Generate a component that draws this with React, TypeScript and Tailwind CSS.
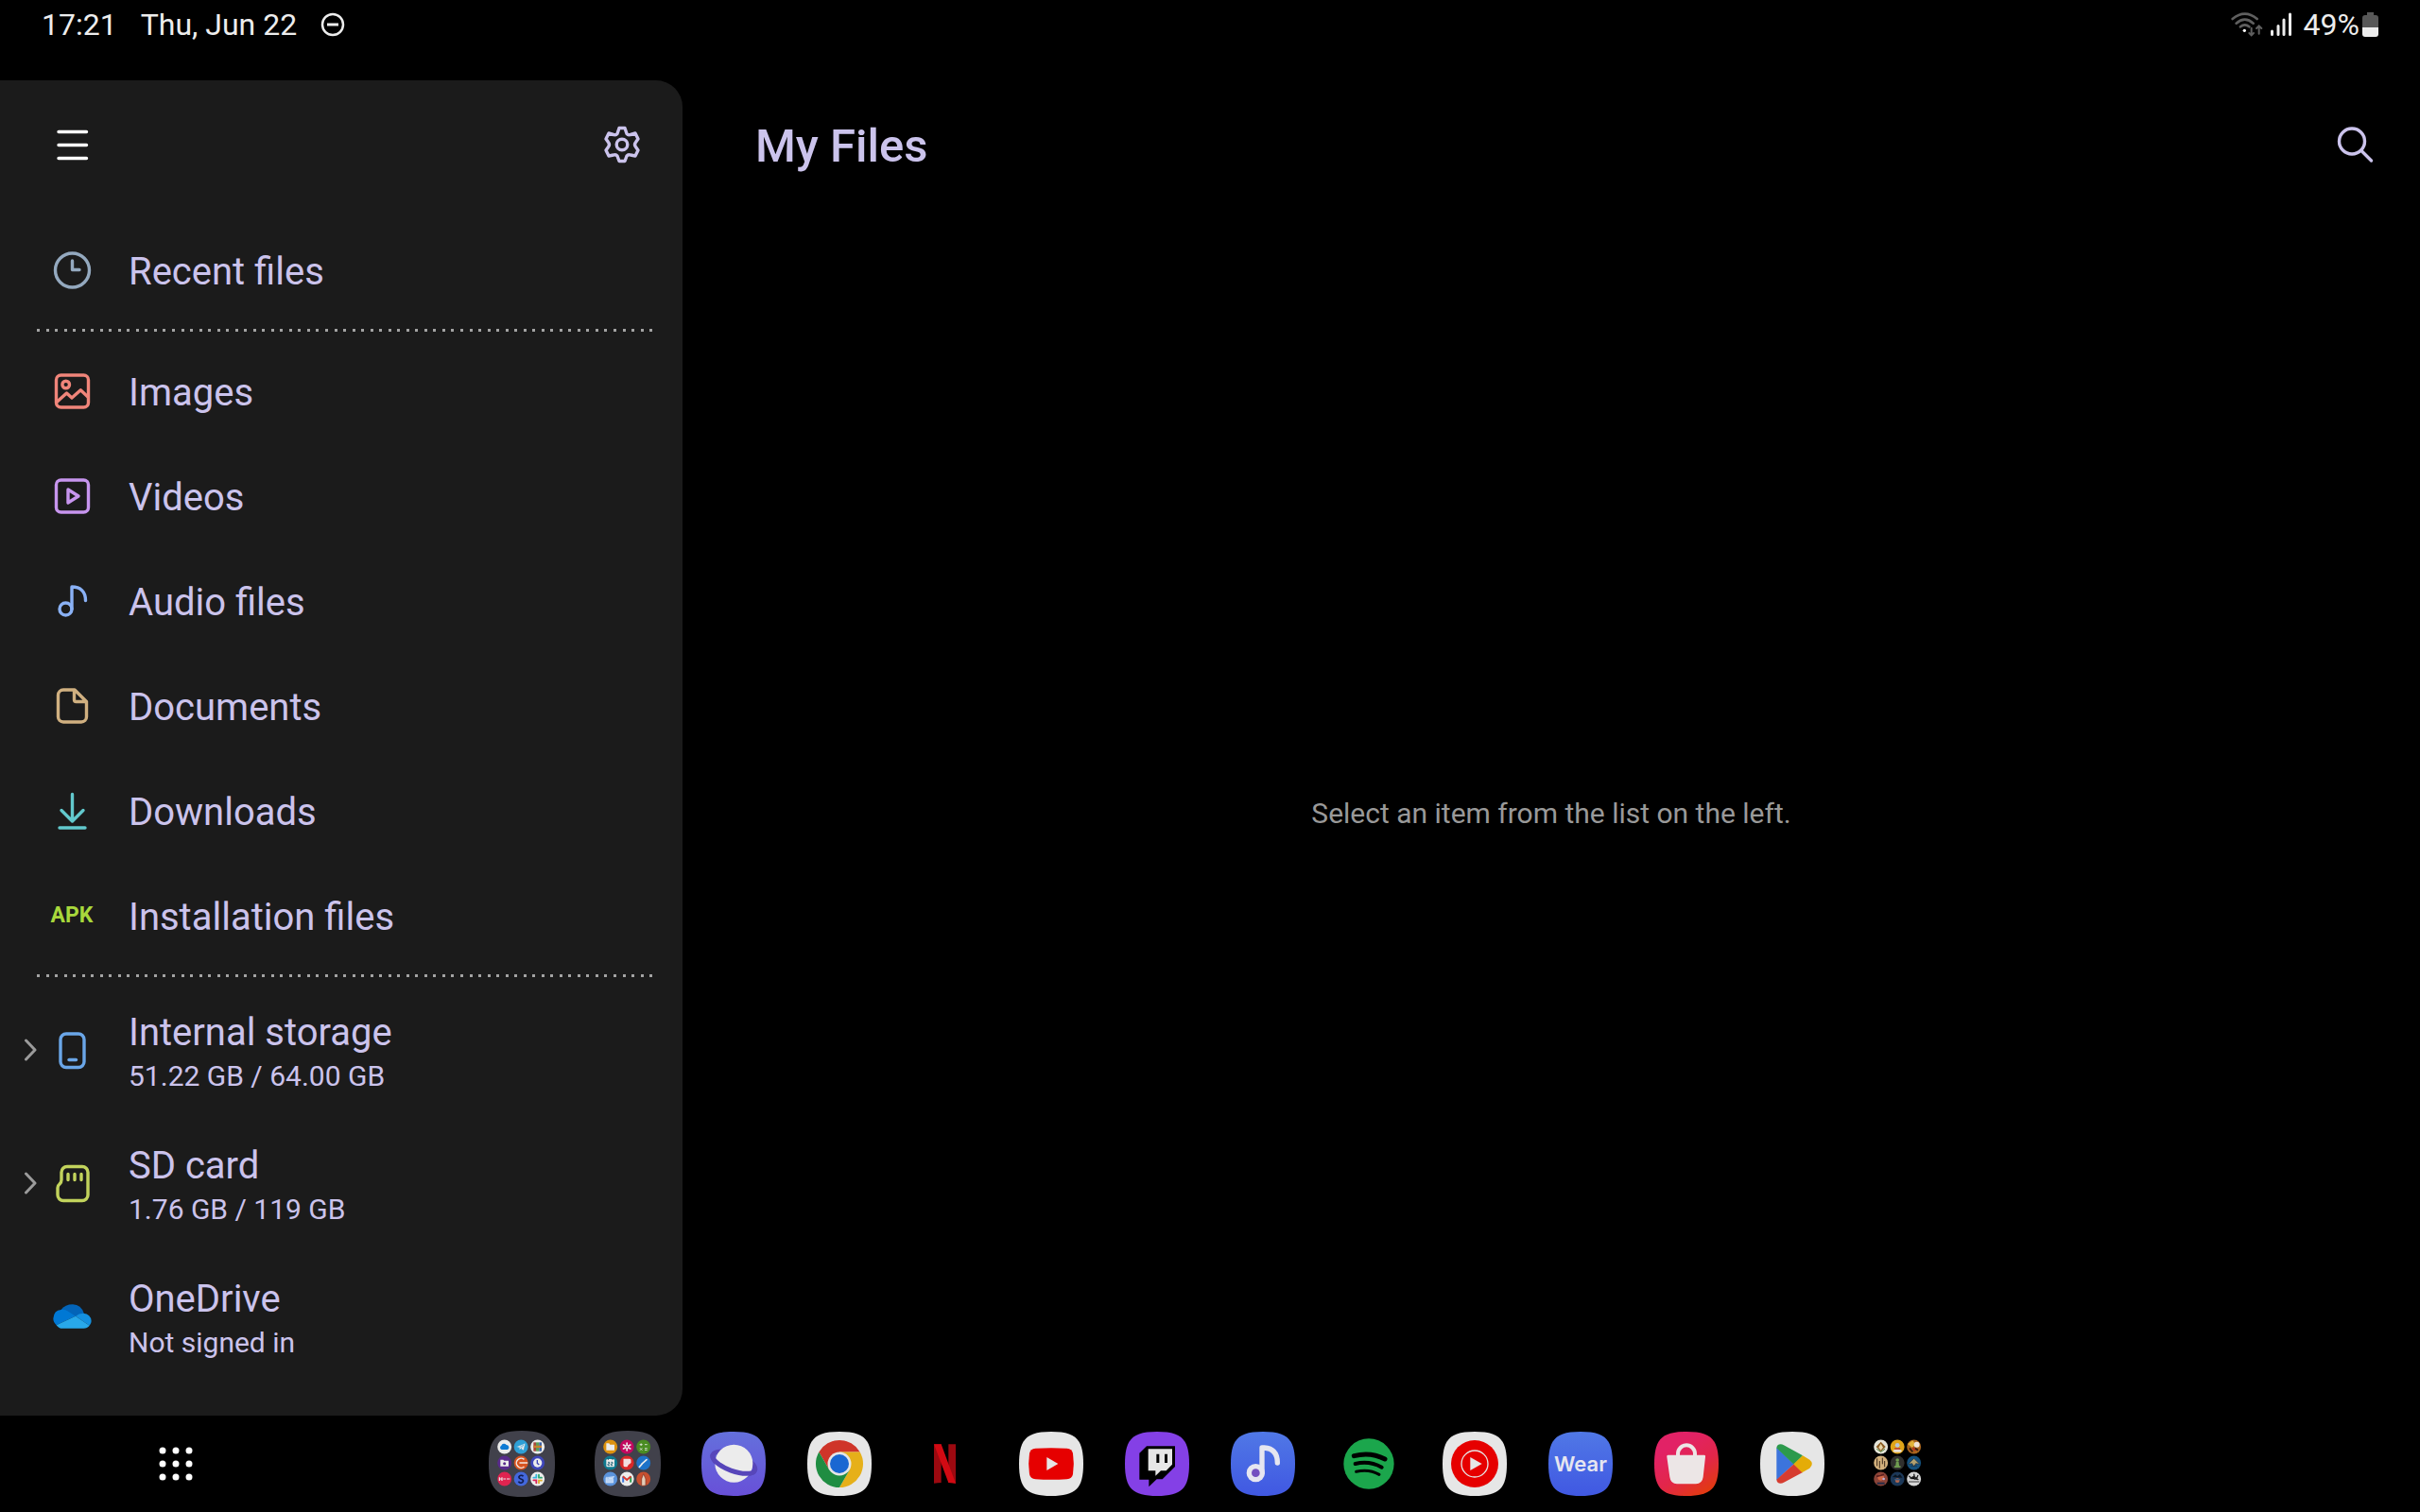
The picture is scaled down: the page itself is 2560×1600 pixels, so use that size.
import type { ReactNode } from "react";

const SQUIRCLE =
  "M0 -102 C78 -102 102 -78 102 0 S78 102 0 102 S-102 78 -102 0 S-78 -102 0 -102Z";

function LineIcon({ color, children }: { color: string; children: ReactNode }) {
  return (
    <svg
      viewBox="0 0 40 40"
      className="h-10 w-10 shrink-0 overflow-visible"
      fill="none"
      stroke={color}
      strokeWidth="3.4"
      strokeLinecap="round"
      strokeLinejoin="round"
      aria-hidden="true"
    >
      {children}
    </svg>
  );
}

function Divider() {
  return (
    <div className="ml-[39px] mr-[31px] flex h-4 items-center justify-between" role="separator">
      {Array.from({ length: 69 }, (_, i) => (
        <span key={i} className="h-[3px] w-[3px] bg-[#a3a3a3]" />
      ))}
    </div>
  );
}

function CategoryRow({ icon, label }: { icon: ReactNode; label: string }) {
  return (
    <button type="button" className="flex h-[111px] w-full items-center gap-10 pl-14 text-left">
      {icon}
      <span className="pt-1 text-[40px] leading-[48px]">{label}</span>
    </button>
  );
}

function StorageRow({
  icon,
  label,
  detail,
  expandable,
}: {
  icon: ReactNode;
  label: string;
  detail: string;
  expandable?: boolean;
}) {
  return (
    <button type="button" className="flex h-[141px] w-full items-center pl-5 text-left">
      <span className="mr-3 flex w-6 shrink-0 justify-center">
        {expandable && (
          <svg viewBox="0 0 24 24" className="h-6 w-6" fill="none" stroke="#9b9b9b" strokeWidth="3" strokeLinecap="round" strokeLinejoin="round" aria-hidden="true">
            <path d="M7.5 2 L17 12 L7.5 22" />
          </svg>
        )}
      </span>
      {icon}
      <span className="ml-10 flex flex-col pt-2">
        <span className="text-[40px] leading-[48px]">{label}</span>
        <span className="text-[30px] leading-[44px]">{detail}</span>
      </span>
    </button>
  );
}

const categories: { label: string; icon: ReactNode }[] = [
  {
    label: "Images",
    icon: (
      <LineIcon color="#f0857a">
        <rect x="3.5" y="3" width="34" height="34" rx="5" />
        <circle cx="13.7" cy="13" r="3.8" />
        <path d="M4.5 31 L14.5 22 L20 27 L29.3 18.8 L37 26" />
      </LineIcon>
    ),
  },
  {
    label: "Videos",
    icon: (
      <LineIcon color="#c795ee">
        <rect x="3.5" y="3" width="34" height="34" rx="5" />
        <path d="M16 13 L27 20 L16 27Z" />
      </LineIcon>
    ),
  },
  {
    label: "Audio files",
    icon: (
      <LineIcon color="#8ab1f5">
        <circle cx="13.5" cy="28.5" r="6.5" />
        <path d="M20 28.5 V5 C29 5 34.5 10 34.5 19.5" />
      </LineIcon>
    ),
  },
  {
    label: "Documents",
    icon: (
      <LineIcon color="#d0b080">
        <path d="M23 3 H11 a5.5 5.5 0 0 0 -5.5 5.5 V31.5 a5.5 5.5 0 0 0 5.5 5.5 H30 a5.5 5.5 0 0 0 5.5 -5.5 V15.5Z M22.5 3.5 V13.5 a2 2 0 0 0 2 2 H35" />
      </LineIcon>
    ),
  },
  {
    label: "Downloads",
    icon: (
      <LineIcon color="#62c9cd">
        <path d="M20.5 2.5 V30.5 M9 19.5 L20.5 31 L32 19.5 M7 38 H34" />
      </LineIcon>
    ),
  },
  {
    label: "Installation files",
    icon: (
      <span className="flex w-10 shrink-0 justify-center text-[23px] font-bold leading-6 text-[#a8d83c]">
        APK
      </span>
    ),
  },
];

function MiniGrid({ items }: { items: { bg: string; glyph?: ReactNode }[] }) {
  return (
    <>
      {items.map((item, i) => (
        <g key={i} transform={`translate(${-55 + (i % 3) * 52.5} ${-54 + Math.floor(i / 3) * 51})`}>
          <circle r="22.5" fill={item.bg} />
          {item.glyph}
        </g>
      ))}
    </>
  );
}

const folderOne = [
  { bg: "#ececec", glyph: <path d="M-9 9 a7 7 0 0 1 -1 -13 a9 9 0 0 1 16 -2 a8 8 0 0 1 4 15Z" fill="#0f7bd4" /> },
  { bg: "#2e9fd6", glyph: <path d="M-15 0 L14 -11 L8 12 L0 6 L-5 10 L-6 3Z M-6 3 L8 -6 L0 6" fill="#ececec" stroke="#2e9fd6" strokeWidth="1.5" /> },
  {
    bg: "#ececec",
    glyph: (
      <g>
        <rect x="-13" y="-14" width="8" height="28" fill="#a8463c" />
        <rect x="-5" y="-14" width="10" height="28" fill="#5a9e58" />
        <rect x="5" y="-14" width="8" height="28" fill="#3b62a8" />
        <rect x="-13" y="-4" width="26" height="7" fill="#c9822f" />
      </g>
    ),
  },
  { bg: "#582a8c", glyph: <g><path d="M-13 -10 H-4 L-1 -7 H13 V11 H-13Z" fill="#ececec" /><circle cy="2" r="4.5" fill="#582a8c" /></g> },
  { bg: "#d6531f", glyph: <path d="M10 -11 A15 15 0 1 0 10 12 M-5 0 H21" fill="none" stroke="#f2e6e0" strokeWidth="4.5" /> },
  { bg: "#3e46b8", glyph: <g><circle r="14" fill="#ececec" /><path d="M-1 -9 V1 L5 6" stroke="#3e46b8" strokeWidth="4" fill="none" /></g> },
  { bg: "#e02450", glyph: <path d="M-16 -5 V6 M-16 0 H-8 M-8 -5 V6 M-4 0 H4 M7 0 H17" stroke="#ececec" strokeWidth="3.5" fill="none" /> },
  { bg: "#4368dc", glyph: <path d="M7 -8 A8 8 0 0 0 -7 -6 C-7 3 8 -1 7 7 A8 8 0 0 1 -8 8" stroke="#101c50" strokeWidth="5" fill="none" /> },
  {
    bg: "#ececec",
    glyph: (
      <g fill="none" strokeWidth="5.5" strokeLinecap="round">
        <path d="M-4 -13 V-5 M-13 -4 H-4" stroke="#36b5dc" />
        <path d="M4 -13 V-4 M13 -4 H9" stroke="#2ba870" />
        <path d="M4 13 V5 H13" stroke="#e0ae2e" />
        <path d="M-4 13 V4 H-13" stroke="#d82558" />
      </g>
    ),
  },
];

const folderTwo = [
  { bg: "#dc920f", glyph: <path d="M-13 -11 H-4 L-1 -7 H13 V11 H-13Z" fill="#ececec" /> },
  {
    bg: "#c2085f",
    glyph: (
      <g stroke="#ececec" strokeWidth="5" strokeLinecap="round">
        <path d="M0 -12 V12 M-11 -6 L11 6 M-11 6 L11 -6" />
        <circle r="3" fill="#c2085f" stroke="none" />
      </g>
    ),
  },
  { bg: "#4a8c22", glyph: <path d="M-12 -7 H-3 M-7.5 -11 V-3 M4 -7 H12 M-11 4 L-4 11 M-4 4 L-11 11 M4 5 H12 M4 10 H12" stroke="#ececec" strokeWidth="2.5" fill="none" /> },
  { bg: "#0f7a90", glyph: <g><rect x="-13" y="-12" width="26" height="25" rx="4" fill="#ececec" /><path d="M-7 -15 V-9 M7 -15 V-9 M-8 -2 H-3 V3 H-8 V8 H-2 M2 -2 H7 V3 H2 V8 H8" stroke="#0f5a70" strokeWidth="2.5" fill="none" /></g> },
  { bg: "#d82828", glyph: <path d="M-11 -13 H9 Q13 -13 13 -8 V0 L5 6 L1 13 H-5 Q-11 13 -11 8Z" fill="#f2dede" /> },
  { bg: "#1d72c8", glyph: <path d="M-13 13 L-4 3 M-6 4 L10 -10" stroke="#ececec" strokeWidth="5" strokeLinecap="round" /> },
  { bg: "#5b93dc", glyph: <path d="M-14 -5 H-6 L-3 -1 H8 L12 -9 M-14 -4 V12 H9 V0" stroke="#dce8f8" strokeWidth="2" fill="#b9d3f5" /> },
  {
    bg: "#ececec",
    glyph: (
      <g fill="none" strokeWidth="6">
        <path d="M-12 11 V-7" stroke="#3c78dc" />
        <path d="M12 11 V-7" stroke="#2ca050" />
        <path d="M-13 -8 L0 3 L13 -8" stroke="#d83a30" />
      </g>
    ),
  },
  { bg: "#c8502f", glyph: <path d="M-6 22 V0 L0 -16 L7 0 V21Z" fill="#e3cdb8" stroke="#7a3222" strokeWidth="2" /> },
];

const gamesFolder = [
  { bg: "#e4e4d8", glyph: <g><path d="M0 -16 L15 0 L0 15 L-15 0Z" fill="#8a5a20" /><path d="M0 -10 L7 2 L0 11 L-7 2Z" fill="#e8d8a8" /><path d="M-13 7 L0 16 L13 7" stroke="#4c7c34" strokeWidth="3" fill="none" /></g> },
  { bg: "#e0a418", glyph: <g><path d="M-15 12 Q0 2 15 12 L10 17 H-10Z" fill="#e8e0d8" /><circle cy="-5" r="7" fill="#b8c4d8" /><path d="M-9 6 H9" stroke="#c04030" strokeWidth="5" /></g> },
  { bg: "#a8651e", glyph: <g><path d="M-20 -9 L-4 -20 L5 -8 L-5 3Z" fill="#e2b33a" /><circle cx="9" cy="-7" r="9" fill="#f0e4d8" /><path d="M-14 4 L-4 16 M3 5 L13 11" stroke="#3b1d10" strokeWidth="6" /><path d="M-4 2 L4 13" stroke="#bc2c1e" strokeWidth="5" /></g> },
  { bg: "#d2b07c", glyph: <path d="M-12 -14 V10 M-4 -6 V17 M5 -16 V4 M12 -6 V13" stroke="#3e2b1c" strokeWidth="3" /> },
  { bg: "#30302e", glyph: <g fill="#6f9c50"><circle cy="-9" r="5.5" /><path d="M-4 -4 H4 L6 10 H-6Z M-10 10 H10 V15 H-10Z" /></g> },
  { bg: "#14507c", glyph: <path d="M-18 4 L0 -14 L18 4 L6 2 L0 12 L-6 2Z M-10 10 L10 10" fill="#b0a070" stroke="#1c2c3c" strokeWidth="2" /> },
  { bg: "#8c4438", glyph: <g><circle cy="-5" r="10" fill="#d06848" /><path d="M-14 -8 L10 -14" stroke="#5c2020" strokeWidth="5" /><path d="M-12 14 L12 14" stroke="#242c48" strokeWidth="6" /><circle cx="9" cy="0" r="4" fill="#b8b0d8" /></g> },
  { bg: "#1c3858", glyph: <g><path d="M-16 -6 L-6 -14 L0 -8 L8 -15 L16 -4Z" fill="#0a1420" /><circle cy="5" r="7" fill="#b06850" /><path d="M-9 2 H9" stroke="#38587c" strokeWidth="4" /></g> },
  { bg: "#d6d6d6", glyph: <g><path d="M-16 -10 L-6 0 M0 -16 L3 2 M13 -12 L8 0 M-12 -1 L0 -8 L14 3" stroke="#242424" strokeWidth="4" /><path d="M-17 9 H17" stroke="#3c3c3c" strokeWidth="3" /></g> },
];

const dockApps: { name: string; art: ReactNode }[] = [
  {
    name: "Tools folder",
    art: (
      <>
        <path d={SQUIRCLE} transform="scale(1.03)" fill="#41414b" />
        <MiniGrid items={folderOne} />
      </>
    ),
  },
  {
    name: "Office folder",
    art: (
      <>
        <path d={SQUIRCLE} transform="scale(1.03)" fill="#41414b" />
        <MiniGrid items={folderTwo} />
      </>
    ),
  },
  {
    name: "Internet",
    art: (
      <>
        <path d={SQUIRCLE} fill="url(#internetBg)" />
        <ellipse rx="71" ry="27" transform="translate(1 -4) rotate(20)" fill="none" stroke="#5746ba" strokeWidth="15" />
        <circle cx="1" cy="-1" r="60" fill="#ececec" />
        <path d="M-71 0 A71 27 0 0 0 71 0" transform="translate(1 -4) rotate(20)" fill="none" stroke="#5746ba" strokeWidth="15" />
      </>
    ),
  },
  {
    name: "Chrome",
    art: (
      <>
        <path d={SQUIRCLE} fill="#e6e6e6" />
        <path d="M0 -37.5 L65 -37.5 A75 75 0 0 0 -65 -37.5 L-32.5 18.75 L0 0Z" fill="#cf3529" />
        <path d="M65 -37.5 A75 75 0 0 1 0 75 L32.5 18.75 L0 0 V-37.5Z" fill="#e6b019" />
        <path d="M0 75 A75 75 0 0 1 -65 -37.5 L-32.5 18.75 L0 0 L32.5 18.75Z" fill="#1f8d42" />
        <circle r="37.5" fill="#e6e6e6" />
        <circle r="30" fill="#1967d2" />
      </>
    ),
  },
  {
    name: "Netflix",
    art: (
      <>
        <path d="M-36 -62 H-13 V60 Q-24 60 -36 62Z M10 -62 H33 V62 Q22 60 10 60Z" fill="#9c0910" />
        <path d="M-36 -62 H-13 L33 62 Q22 60 10 60Z" fill="#d20a13" />
      </>
    ),
  },
  {
    name: "YouTube",
    art: (
      <>
        <path d={SQUIRCLE} fill="#e6e6e6" />
        <path d="M-50 -49 Q0 -52 50 -49 Q66 -48 69 -33 Q74 0 69 33 Q66 48 50 49 Q0 52 -50 49 Q-66 48 -69 33 Q-74 0 -69 -33 Q-66 -48 -50 -49Z" fill="#e60000" />
        <path d="M-14 -21 L22 0 L-14 21Z" fill="#e6e6e6" />
      </>
    ),
  },
  {
    name: "Twitch",
    art: (
      <>
        <path d={SQUIRCLE} fill="#8440e6" />
        <path d="M-56 -34 L-33 -56 H57 V9 L17 49 H-1 L-26 73 V50 H-56Z" fill="#000" />
        <path d="M-28 -47 H48 V2 L29 22 H12 L-5 38 V22 H-28Z" fill="#e6e6e6" />
        <path d="M-2 -31 H7 V-3 H-2Z M24 -31 H33 V-3 H24Z" fill="#000" />
      </>
    ),
  },
  {
    name: "Samsung Music",
    art: (
      <>
        <path d={SQUIRCLE} fill="url(#blueBg)" />
        <path d="M-3 29 V-51 H4 C34 -49 46 -32 46 -3" fill="none" stroke="#e6e6f0" strokeWidth="16" strokeLinecap="round" strokeLinejoin="round" />
        <circle cx="-23" cy="29" r="29" fill="#e6e6f0" />
        <circle cx="-23" cy="29" r="13" fill="#7450c0" />
      </>
    ),
  },
  {
    name: "Spotify",
    art: (
      <>
        <circle r="80" fill="#1ba64c" />
        <g fill="none" stroke="#000" strokeLinecap="round">
          <path d="M-47 -25 C-12 -34 22 -30 51 -15" strokeWidth="15" />
          <path d="M-43 0 C-14 -7 14 -4 41 11" strokeWidth="12" />
          <path d="M-40 25 C-14 19 10 21 33 34" strokeWidth="9" />
        </g>
      </>
    ),
  },
  {
    name: "YouTube Music",
    art: (
      <>
        <path d={SQUIRCLE} fill="#e6e6e6" />
        <circle r="75" fill="#e60000" />
        <circle r="42" fill="none" stroke="#e6e6e6" strokeWidth="4" />
        <path d="M-14 -21 L23 0 L-14 21Z" fill="#e6e6e6" />
      </>
    ),
  },
  {
    name: "Galaxy Wearable",
    art: (
      <>
        <path d={SQUIRCLE} fill="url(#blueBg)" />
        <text y="23" textAnchor="middle" fontSize="66" fontWeight="600" fill="#e6e6f0" className="font-[Inter,sans-serif]">
          Wear
        </text>
      </>
    ),
  },
  {
    name: "Galaxy Store",
    art: (
      <>
        <path d={SQUIRCLE} fill="url(#storeBg)" />
        <path d="M-27 -26 V-32 A27 27 0 0 1 27 -32 V-26" fill="none" stroke="#ece6e6" strokeWidth="12" />
        <path d="M-58 -28 H56 Q61 -28 60 -22 L53 42 Q50 64 30 64 H-30 Q-50 64 -53 42 L-62 -22 Q-63 -28 -58 -28Z" fill="#ece6e6" />
      </>
    ),
  },
  {
    name: "Play Store",
    art: (
      <>
        <path d={SQUIRCLE} fill="#e6e6e6" />
        <path d="M-50 -52 L5 1 L-50 52Z" fill="#3c74dc" />
        <path d="M-50 -50 Q-49 -62 -37 -62 Q-32 -62 -27 -59 L33 -26 L5 2Z" fill="#2c9a4c" />
        <path d="M-50 50 Q-49 62 -37 62 Q-32 62 -27 59 L33 27 L5 1Z" fill="#d63c30" />
        <path d="M33 -26 L55 -13 Q70 -1 55 14 L31 28 L4 1Z" fill="#e4ac08" />
      </>
    ),
  },
  { name: "Games folder", art: <MiniGrid items={gamesFolder} /> },
];

function StatusBar() {
  return (
    <header className="flex h-[85px] items-start justify-between pl-11 pr-11 text-[32px] leading-[38px] text-[#ededed]">
      <div className="flex items-center gap-[25px] pt-[7px]">
        <time>17:21</time>
        <span>Thu, Jun 22</span>
        <svg viewBox="0 0 26 26" className="h-[26px] w-[26px]" fill="none" stroke="#ededed" strokeWidth="2.5" role="img" aria-label="Do not disturb">
          <circle cx="13" cy="13" r="11" />
          <path d="M7 13 H19" strokeWidth="3" />
        </svg>
      </div>
      <div className="flex items-center pt-[7px]">
        <svg viewBox="0 0 100 78" className="mr-2 h-[26px] w-[34px]" fill="none" stroke="#5f5f5f" strokeWidth="8" strokeLinecap="round" role="img" aria-label="Wi-Fi">
          <path d="M4 21 Q43 -11 82 21 M16 35 Q43 11 70 35 M29 46 Q43 34 57 46" />
          <circle cx="42" cy="58" r="5" fill="#fff" stroke="none" />
          <path d="M64 50 V72 M57 66 L64 73 L71 66 M88 68 V45 M80 51 L88 43 L96 51" strokeWidth="6" />
        </svg>
        <svg viewBox="0 0 22 26" className="mr-[13px] h-[26px] w-[22px] overflow-visible" fill="none" stroke="#ededed" strokeWidth="3" strokeLinecap="round" role="img" aria-label="Signal">
          <path d="M1.5 20 V23.5 M8 14.5 V23.5 M14 8 V23.5 M20.5 2 V23.5" />
        </svg>
        <span className="mr-[3px]">49%</span>
        <svg viewBox="0 0 17 26" className="h-[26px] w-[17px]" aria-hidden="true">
          <path d="M5 0 H12 V3 H14 Q17 3 17 6 V16 H0 V6 Q0 3 3 3 H5Z" fill="#585858" />
          <path d="M0 16 H17 V23 Q17 26 14 26 H3 Q0 26 0 23Z" fill="#ededed" />
        </svg>
      </div>
    </header>
  );
}

function Sidebar() {
  return (
    <aside className="w-[722px] shrink-0 rounded-r-[28px] bg-[#1b1b1b] pb-[35px] text-[#cbc3ec]">
      <div className="mb-[9px] flex h-[136px] items-center justify-between pl-14 pr-11">
        <button type="button" aria-label="Toggle navigation">
          <LineIcon color="#ffffff">
            <path d="M6 6.500 H35.500 M6 20.500 H35.500 M6 34.500 H35.500" />
          </LineIcon>
        </button>
        <button type="button" aria-label="Settings">
          <LineIcon color="#cbc3ec">
            <circle cx="20" cy="20" r="5.8" />
            <path d="M17 2.5 H23 L25 8.5 Q26.5 10.5 29 9.5 L34 8 L37 14 L34.5 17.5 Q32.5 20 34.5 22.5 L37 26 L34 32 L29 31 Q26.5 30 25 32 L23 37.5 H17 L15 32 Q13.5 30 11 31 L6 32 L3 26 L5.5 22.5 Q7.5 20 5.5 17.5 L3 14 L6 8 L11 9.5 Q13.5 10.5 15 8.5Z" />
          </LineIcon>
        </button>
      </div>
      <nav aria-label="Files">
        <CategoryRow
          label="Recent files"
          icon={
            <LineIcon color="#94a9bf">
              <circle cx="20.5" cy="20" r="18" />
              <path d="M20.5 10 V19.5 H28" />
            </LineIcon>
          }
        />
        <Divider />
        <div className="pt-px">
          {categories.map((c) => (
            <CategoryRow key={c.label} label={c.label} icon={c.icon} />
          ))}
        </div>
        <Divider />
        <StorageRow
          label="Internal storage"
          detail="51.22 GB / 64.00 GB"
          expandable
          icon={
            <LineIcon color="#6aa6e8">
              <rect x="8" y="3" width="25" height="35.5" rx="6" />
              <path d="M17 30.5 H24.5" />
            </LineIcon>
          }
        />
        <StorageRow
          label="SD card"
          detail="1.76 GB / 119 GB"
          expandable
          icon={
            <LineIcon color="#c2d35c">
              <path d="M15 2.5 H31 a6 6 0 0 1 6 6 V32.5 a6 6 0 0 1 -6 6 H11 a6 6 0 0 1 -6 -6 V25 Q5 22.5 7 21 Q9 19 9 16.5 V8.5 a6 6 0 0 1 6 -6Z M16 10.5 V16.5 M23 10.5 V16.5 M30 10.5 V16.5" />
            </LineIcon>
          }
        />
        <StorageRow
          label="OneDrive"
          detail="Not signed in"
          icon={
            <svg viewBox="108 938 120 122" className="h-10 w-10 shrink-0 overflow-visible" aria-hidden="true">
              <path d="M133 978 Q146 960 171 960 Q198 961 207 989 L179 999Z" fill="#0364b8" />
              <path d="M133 978 Q144 975 155 982 L180 998 L118 1027 Q108 1018 108 1006 Q110 980 133 978Z" fill="#0078d4" />
              <path d="M180 998 Q191 989 205 989 Q229 991 231 1014 Q231 1021 225 1029Z" fill="#1490df" />
              <path d="M118 1027 L180 998 L225 1029 Q218 1038 206 1038 H138 Q126 1038 118 1027Z" fill="#28a8ea" />
            </svg>
          }
        />
      </nav>
    </aside>
  );
}

function Dock() {
  return (
    <footer className="grid h-[102px] grid-cols-[1fr_auto_1fr] items-center">
      <button type="button" aria-label="All apps" className="ml-[166px] w-10">
        <svg viewBox="0 0 40 40" className="h-10 w-10" fill="#fff" aria-hidden="true">
          {[6, 20, 34].map((y) => [6, 20, 34].map((x) => <circle key={`${x}-${y}`} cx={x} cy={y} r="3.5" />))}
        </svg>
      </button>
      <div className="flex gap-[42px]">
        {dockApps.map((app) => (
          <button key={app.name} type="button" aria-label={app.name}>
            <svg viewBox="-105 -105 210 210" className="block h-[70px] w-[70px] overflow-visible" aria-hidden="true">
              {app.art}
            </svg>
          </button>
        ))}
      </div>
    </footer>
  );
}

export default function App() {
  return (
    <div className="flex min-h-screen flex-col bg-black font-[Roboto,sans-serif]">
      <svg className="absolute h-0 w-0" aria-hidden="true">
        <defs>
          <linearGradient id="internetBg" x1="0" y1="0" x2="0" y2="1">
            <stop offset="0" stopColor="#6470dc" />
            <stop offset="1" stopColor="#6850d8" />
          </linearGradient>
          <linearGradient id="blueBg" x1="0" y1="0" x2="0" y2="1">
            <stop offset="0" stopColor="#5078e6" />
            <stop offset="1" stopColor="#4058e2" />
          </linearGradient>
          <linearGradient id="storeBg" x1="0.3" y1="0.2" x2="0.8" y2="1">
            <stop offset="0" stopColor="#e22266" />
            <stop offset="0.5" stopColor="#e2264a" />
            <stop offset="1" stopColor="#e23c0c" />
          </linearGradient>
        </defs>
      </svg>
      <StatusBar />
      <div className="flex grow">
        <Sidebar />
        <main className="flex grow flex-col">
          <div className="flex h-[136px] items-center justify-between pl-[77px] pr-12">
            <h1 className="pt-1 text-[49px] font-medium leading-[56px] text-[#cbc3ec]">My Files</h1>
            <button type="button" aria-label="Search">
              <LineIcon color="#cbc3ec">
                <circle cx="16" cy="16.5" r="13.5" />
                <path d="M26 26.5 L36.5 37" />
              </LineIcon>
            </button>
          </div>
          <p className="flex grow items-center justify-center pt-[2px] text-[30px] leading-9 text-[#999999]">
            Select an item from the list on the left.
          </p>
        </main>
      </div>
      <Dock />
    </div>
  );
}
